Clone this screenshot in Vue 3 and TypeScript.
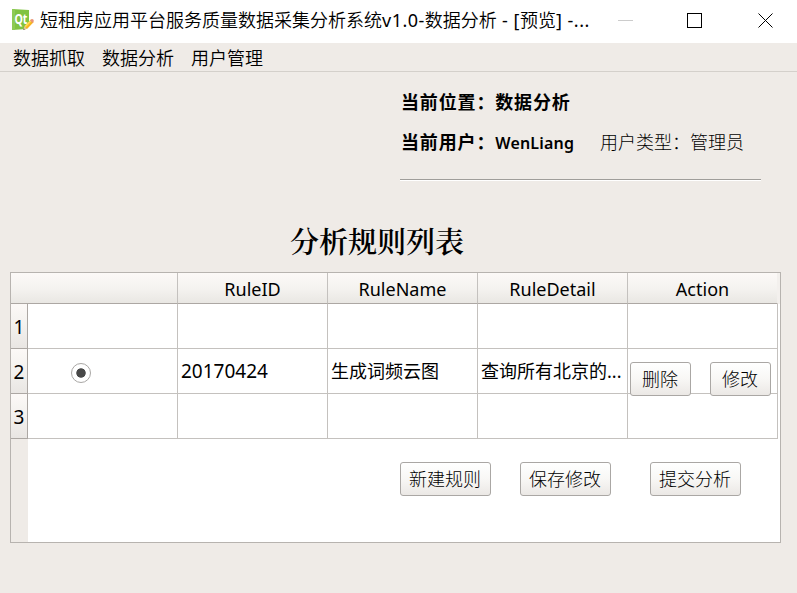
<script setup lang="ts">
interface Rule {
  no: number
  selected: boolean
  id: string
  name: string
  detail: string
}

const menus: string[] = ['数据抓取', '数据分析', '用户管理']
const columns: string[] = ['', 'RuleID', 'RuleName', 'RuleDetail', 'Action']
const rules: Rule[] = [
  { no: 1, selected: false, id: '', name: '', detail: '' },
  { no: 2, selected: true, id: '20170424', name: '生成词频云图', detail: '查询所有北京的...' },
  { no: 3, selected: false, id: '', name: '', detail: '' },
]
const formActions: string[] = ['新建规则', '保存修改', '提交分析']
</script>

<template>
  <div class="window">
    <header class="titlebar">
      <svg class="app-icon" width="24" height="24" viewBox="0 0 24 24">
        <path d="M1 1 18 2v16.500L15.500 21 1 22z" fill="#80c342" />
        <path d="M1 1 4 1.200v20.600L1 22z" fill="#8dcb55" />
        <text x="3.400" y="16" class="icon-text" textLength="13" lengthAdjust="spacingAndGlyphs">Qt</text>
        <path d="M12.500 21.800 13.600 18 20 11.500l2.800 2.600-6.600 6.600z" fill="#f7b520" />
        <path d="m13.600 18 6.400-6.500 1.200 1.100-6.500 6.600z" fill="#ffdc58" />
        <path d="m19 12.500 1.300-1.300q1-.7 2 .3.9 1 .2 2L21.700 15z" fill="#e9927c" />
        <path d="m12.300 22 1.200-3.700 2.400 2.400z" fill="#dac6a5" />
        <path d="m12.300 22 .5-1.500 1 1z" fill="#555" />
      </svg>
      <span class="caption">短租房应用平台服务质量数据采集分析系统<span class="latin">v1.0-</span>数据分析<span class="latin"> - [</span>预览<span class="latin">] -...</span></span>
      <svg class="controls" width="149" height="16" viewBox="0 0 149 16" shape-rendering="crispEdges">
        <path d="M0 7.500h15" stroke="#ccc" />
        <path d="M69.500.500h14v14h-14z" fill="none" stroke="#000" />
        <path d="m140.500.500 14 14m0-14-14 14" fill="none" stroke="#000" shape-rendering="auto" />
      </svg>
    </header>

    <nav class="menubar">
      <span v-for="m in menus" :key="m">{{ m }}</span>
    </nav>

    <main>
      <section class="info">
        <div class="info-row strong">当前位置：数据分析</div>
        <div class="info-row">
          <span class="strong user">当前用户：<span class="user-name">WenLiang</span></span>
          <span class="role">用户类型：管理员</span>
        </div>
        <div class="rule"></div>
      </section>

      <h1>分析规则列表</h1>

      <section class="table">
        <div class="head">
          <div v-for="(c, i) in columns" :key="i" class="th" :class="{ first: i === 0 }">{{ c }}</div>
        </div>
        <div class="body">
          <div v-for="r in rules" :key="r.no" class="row">
            <div class="num">{{ r.no }}</div>
            <div class="cell pick"><i v-if="r.selected" class="radio"></i></div>
            <div class="cell digits">{{ r.id }}</div>
            <div class="cell">{{ r.name }}</div>
            <div class="cell">{{ r.detail }}</div>
            <div class="cell actions">
              <template v-if="r.selected">
                <button class="small">删除</button>
                <button class="small">修改</button>
              </template>
            </div>
          </div>
          <div class="rest">
            <div class="gutter"></div>
            <div class="form-actions">
              <button v-for="a in formActions" :key="a">{{ a }}</button>
            </div>
          </div>
        </div>
      </section>
    </main>
  </div>
</template>

<style>
body {
  background: #efebe7;
  overflow: hidden;
}
</style>

<style scoped>
.window {
  width: 797px;
  height: 593px;
  overflow: hidden;
  background: #efebe7;
  color: #000;
  font: 400 18px "Noto Sans", "Noto Sans CJK SC", sans-serif;
  display: flex;
  flex-direction: column;
}
.titlebar {
  height: 43px;
  background: #fff;
  display: flex;
  align-items: center;
  padding-left: 11px;
}
.app-icon {
  margin-top: -3px;
  flex: none;
}
.icon-text {
  font: bold 15px "Open Sans", sans-serif;
  fill: #fff;
}
.caption {
  margin: -3px 0 0 5px;
  width: 578px;
  font-weight: 350;
  line-height: 26px;
  white-space: nowrap;
}
.latin {
  font-weight: 400;
  letter-spacing: 0.5px;
}
.controls {
  margin-top: -1px;
  overflow: visible;
}
.menubar {
  box-sizing: border-box;
  height: 29px;
  border-bottom: 1px solid #d4d0cb;
  display: flex;
  gap: 17px;
  padding-left: 13px;
  font-weight: 350;
  line-height: 30px;
}
main {
  display: flex;
  flex-direction: column;
}
.info {
  margin: 18px 0 0 400px;
  width: 361px;
}
.info-row {
  display: flex;
  height: 40px;
  line-height: 25px;
  padding-left: 1px;
}
.strong {
  font-weight: 700;
  letter-spacing: 0.85px;
}
.user {
  width: 199px;
}
.user-name {
  font-family: "Noto Sans", sans-serif;
  font-size: 16px;
  font-weight: 600;
  letter-spacing: 0.2px;
}
.role {
  font-weight: 300;
}
.rule {
  margin-top: 9px;
  border-top: 1px solid #9f9d9a;
  border-bottom: 1px solid #fff;
}
h1 {
  margin: 39px 0 11px 290px;
  font-family: "Noto Serif CJK SC", "Noto Sans CJK SC", serif;
  font-size: 29px;
  font-weight: 600;
  line-height: 41px;
}
.table {
  box-sizing: border-box;
  width: 771px;
  height: 271px;
  margin-left: 10px;
  border: 1px solid #b7b3af;
  background: #fff;
  display: flex;
  flex-direction: column;
}
.head {
  display: flex;
  height: 31px;
  background: #f3f0ed;
}
.th {
  box-sizing: border-box;
  width: 150px;
  height: 31px;
  border-right: 1px solid #c4c1be;
  border-bottom: 1px solid #aca7a3;
  background: linear-gradient(#fcf9f7, #f5f3f0 50%, #e9e7e3);
  text-align: center;
  line-height: 33px;
}
.th.first {
  width: 167px;
}
.th:last-child {
  border-right-color: #f3f0ed;
}
.body {
  flex: 1;
  display: flex;
  flex-direction: column;
}
.row {
  display: flex;
  height: 45px;
}
.num {
  box-sizing: border-box;
  width: 17px;
  border-right: 1px solid #aca7a3;
  border-bottom: 1px solid #aca7a3;
  background: linear-gradient(#fcf9f7, #f3f1ee 50%, #e9e6e3);
  font-size: 19px;
  line-height: 46px;
  text-align: center;
}
.cell {
  box-sizing: border-box;
  width: 150px;
  border-right: 1px solid #c4c1be;
  border-bottom: 1px solid #c4c1be;
  padding-left: 3px;
  line-height: 45px;
  white-space: nowrap;
}
.digits {
  font-size: 19px;
  line-height: 44px;
}
.pick {
  padding: 14px 0 0 43px;
}
.radio {
  display: block;
  box-sizing: border-box;
  width: 20px;
  height: 20px;
  border: 1px solid #a9a7a5;
  border-radius: 50%;
  background: radial-gradient(circle, #484848 4.300px, #fff 5.100px);
}
.actions {
  display: flex;
  gap: 19px;
  padding: 13px 0 0 2px;
}
button {
  flex: none;
  box-sizing: border-box;
  width: 91px;
  height: 34px;
  padding: 0 1px 0 0;
  border: 1px solid #aaa7a4;
  border-radius: 3px;
  background: linear-gradient(#fff, #f8f7f5 50%, #ebe8e5);
  color: #000;
  font: 300 18px/31px "Noto Sans", "Noto Sans CJK SC", sans-serif;
  position: relative;
}
.small {
  width: 61px;
}
.rest {
  flex: 1;
  display: flex;
}
.gutter {
  width: 17px;
  background: #efebe7;
}
.form-actions {
  display: flex;
  padding: 23px 0 0 372px;
  gap: 29px;
}
.form-actions button:last-child {
  margin-left: 10px;
}
</style>
